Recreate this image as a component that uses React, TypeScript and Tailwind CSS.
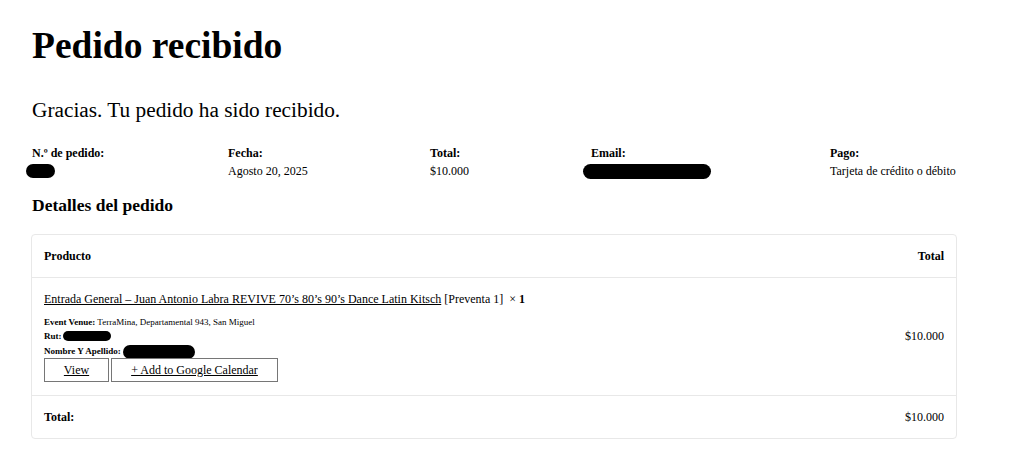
import React from 'react';

const INFO = [
    { label: 'N.º de pedido:', value: null, blob: 'w-[29px] h-[14px] -ml-[6px]' },
    { label: 'Fecha:', value: 'Agosto 20, 2025' },
    { label: 'Total:', value: '$10.000' },
    { label: 'Email:', value: null, blob: 'w-[128px] h-[15px] -ml-[8px]' },
    { label: 'Pago:', value: 'Tarjeta de crédito o débito' },
];

const Blob = ({ className }: { className: string }) => (
    <span className={`inline-block bg-black rounded-full align-middle ${className}`} />
);

export default function App() {
    return (
        <div className="min-h-screen bg-white text-black font-['Liberation_Serif','Times_New_Roman',serif] px-[32px] pt-[22px]">
            <h1 className="text-[37.5px] font-bold leading-[48px]">Pedido recibido</h1>
            <p className="text-[21.3px] leading-[28px] mt-[26px]">Gracias. Tu pedido ha sido recibido.</p>

            <div className="grid grid-cols-[196px_202px_161px_239px_1fr] mt-[20px] text-[12px] leading-[18px]">
                {INFO.map(item => (
                    <div key={item.label}>
                        <div className="font-bold">{item.label}</div>
                        <div className="h-[18px] flex items-center">
                            {item.value ? item.value : <Blob className={item.blob!} />}
                        </div>
                    </div>
                ))}
            </div>

            <h2 className="text-[17.5px] font-bold leading-[24px] mt-[13px]">Detalles del pedido</h2>

            <div className="mt-[17px] -ml-[1px] w-[926px] border border-[#e8e8e8] rounded-[4px] text-[12px]">
                <div className="flex justify-between items-center h-[43px] px-[12px] border-b border-[#e8e8e8] font-bold">
                    <span>Producto</span>
                    <span>Total</span>
                </div>

                <div className="flex justify-between items-center px-[12px] pt-[12px] pb-[13px] border-b border-[#e8e8e8]">
                    <div>
                        <div className="leading-[18px]">
                            <a href="#" className="underline">Entrada General – Juan Antonio Labra REVIVE 70’s 80’s 90’s Dance Latin Kitsch</a>
                            <span> [Preventa 1]</span>
                            <span className="ml-[6px] font-bold"><span className="font-normal">×</span> 1</span>
                        </div>
                        <div className="mt-[7px] text-[9px] leading-[14px]">
                            <div><b>Event Venue:</b> TerraMina, Departamental 943, San Miguel</div>
                            <div className="flex items-center"><b>Rut:</b><Blob className="w-[48px] h-[10px] ml-[1px]" /></div>
                            <div className="flex items-center"><b>Nombre Y Apellido:</b><Blob className="w-[72px] h-[14px] ml-[2px] mt-[2px]" /></div>
                        </div>
                        <div className="flex gap-[2px] -mt-[1px] text-[12px]">
                            <a href="#" className="w-[65px] h-[24px] border border-[#767676] flex items-center justify-center underline">View</a>
                            <a href="#" className="w-[167px] h-[24px] border border-[#767676] flex items-center justify-center underline">+ Add to Google Calendar</a>
                        </div>
                    </div>
                    <span>$10.000</span>
                </div>

                <div className="flex justify-between items-center h-[42px] px-[12px]">
                    <span className="font-bold">Total:</span>
                    <span>$10.000</span>
                </div>
            </div>
        </div>
    );
}
